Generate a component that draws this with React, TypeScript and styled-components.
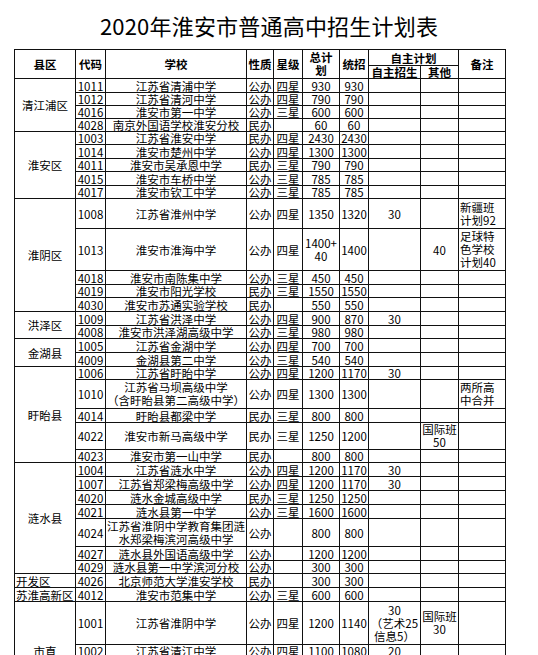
import React from 'react';
import styled, { createGlobalStyle } from 'styled-components';

type School = {
  code: string;
  name: string;
  kind: string;
  star?: string;
  total: string;
  plan: string;
  self?: string;
  other?: string;
  note?: string;
  h: number;
  top?: boolean;
};

type District = {
  name: string;
  align?: 'left' | 'center';
  rows: School[];
};

const districts: District[] = [
  {
    name: '清江浦区',
    rows: [
      { code: '1011', name: '江苏省清浦中学', kind: '公办', star: '四星', total: '930', plan: '930', h: 14 },
      { code: '1012', name: '江苏省清河中学', kind: '公办', star: '四星', total: '790', plan: '790', h: 13 },
      { code: '4016', name: '淮安市第一中学', kind: '公办', star: '三星', total: '600', plan: '600', h: 13 },
      { code: '4028', name: '南京外国语学校淮安分校', kind: '民办', total: '60', plan: '60', h: 13 },
    ],
  },
  {
    name: '淮安区',
    rows: [
      { code: '1003', name: '江苏省淮安中学', kind: '民办', star: '四星', total: '2430', plan: '2430', h: 13 },
      { code: '1014', name: '淮安市楚州中学', kind: '公办', star: '四星', total: '1300', plan: '1300', h: 14 },
      { code: '4011', name: '淮安市吴承恩中学', kind: '民办', star: '三星', total: '790', plan: '790', h: 13 },
      { code: '4015', name: '淮安市车桥中学', kind: '公办', star: '三星', total: '785', plan: '785', h: 14 },
      { code: '4017', name: '淮安市钦工中学', kind: '公办', star: '三星', total: '785', plan: '785', h: 13 },
    ],
  },
  {
    name: '淮阴区',
    rows: [
      { code: '1008', name: '江苏省淮州中学', kind: '公办', star: '四星', total: '1350', plan: '1320', self: '30', note: '新疆班\n计划92', h: 30 },
      { code: '1013', name: '淮安市淮海中学', kind: '公办', star: '四星', total: '1400+\n40', plan: '1400', other: '40', note: '足球特\n色学校\n计划40', h: 42 },
      { code: '4018', name: '淮安市南陈集中学', kind: '公办', star: '三星', total: '450', plan: '450', h: 14 },
      { code: '4019', name: '淮安市阳光学校', kind: '民办', star: '三星', total: '1550', plan: '1550', h: 13 },
      { code: '4030', name: '淮安市苏通实验学校', kind: '民办', total: '550', plan: '550', h: 14 },
    ],
  },
  {
    name: '洪泽区',
    rows: [
      { code: '1009', name: '江苏省洪泽中学', kind: '公办', star: '四星', total: '900', plan: '870', self: '30', h: 14 },
      { code: '4008', name: '淮安市洪泽湖高级中学', kind: '公办', star: '三星', total: '980', plan: '980', h: 13 },
    ],
  },
  {
    name: '金湖县',
    rows: [
      { code: '1005', name: '江苏省金湖中学', kind: '公办', star: '四星', total: '700', plan: '700', h: 14 },
      { code: '4009', name: '金湖县第二中学', kind: '公办', star: '三星', total: '540', plan: '540', h: 14 },
    ],
  },
  {
    name: '盱眙县',
    rows: [
      { code: '1006', name: '江苏省盱眙中学', kind: '公办', star: '四星', total: '1200', plan: '1170', self: '30', h: 13 },
      { code: '1010', name: '江苏省马坝高级中学\n（含盱眙县第二高级中学）', kind: '公办', star: '四星', total: '1300', plan: '1300', note: '两所高\n中合并', h: 29 },
      { code: '4014', name: '盱眙县都梁中学', kind: '民办', star: '三星', total: '800', plan: '800', h: 14 },
      { code: '4022', name: '淮安市新马高级中学', kind: '民办', star: '三星', total: '1250', plan: '1200', other: '国际班\n50', h: 27 },
      { code: '4023', name: '淮安市第一山中学', kind: '民办', total: '800', plan: '800', h: 13 },
    ],
  },
  {
    name: '涟水县',
    rows: [
      { code: '1004', name: '江苏省涟水中学', kind: '公办', star: '四星', total: '1200', plan: '1170', self: '30', h: 14 },
      { code: '1007', name: '江苏省郑梁梅高级中学', kind: '公办', star: '四星', total: '1200', plan: '1170', self: '30', h: 14 },
      { code: '4020', name: '涟水金城高级中学', kind: '民办', star: '三星', total: '1250', plan: '1250', h: 14 },
      { code: '4021', name: '涟水县第一中学', kind: '公办', star: '三星', total: '1600', plan: '1600', h: 14 },
      { code: '4024', name: '江苏省淮阴中学教育集团涟\n水郑梁梅滨河高级中学', kind: '公办', total: '800', plan: '800', h: 28 },
      { code: '4027', name: '涟水县外国语高级中学', kind: '公办', total: '1200', plan: '1200', h: 14 },
      { code: '4029', name: '涟水县第一中学滨河分校', kind: '公办', total: '300', plan: '300', h: 13 },
    ],
  },
  {
    name: '开发区',
    align: 'left',
    rows: [
      { code: '4026', name: '北京师范大学淮安学校', kind: '民办', total: '300', plan: '300', h: 14 },
    ],
  },
  {
    name: '苏淮高新区',
    align: 'left',
    rows: [
      { code: '4012', name: '淮安市范集中学', kind: '公办', star: '三星', total: '600', plan: '600', h: 14 },
    ],
  },
  {
    name: '市直',
    rows: [
      { code: '1001', name: '江苏省淮阴中学', kind: '公办', star: '四星', total: '1200', plan: '1140', self: '30\n（艺术25\n信息5）', other: '国际班\n30', h: 43 },
      { code: '1002', name: '江苏省清江中学', kind: '公办', star: '四星', total: '1100', plan: '1080', self: '20', h: 56, top: true },
    ],
  },
];

const columns = [61, 30, 141, 27, 29, 37, 29, 52, 38, 47];

const GlobalStyle = createGlobalStyle`
  html, body {
    margin: 0;
    padding: 0;
    background: #fff;
  }
  body {
    font-family: "Noto Sans CJK SC", "Noto Sans", sans-serif;
    color: #000;
  }
`;

const Page = styled.div`
  width: 538px;
  height: 655px;
  overflow: hidden;
`;

const Title = styled.h1`
  margin: 0;
  height: 49px;
  padding-top: 12px;
  box-sizing: border-box;
  text-align: center;
  font-size: 22px;
  line-height: 26px;
  font-weight: 400;
  letter-spacing: 0.2px;
`;

const Sheet = styled.table`
  margin-left: 14px;
  width: 491px;
  border-collapse: collapse;
  table-layout: fixed;
`;

const HeadRow = styled.tr<{ $h: number }>`
  height: ${(p) => p.$h}px;
`;

const HeadCell = styled.th`
  border: 1px solid #111;
  padding: 0;
  font-size: 11.5px;
  line-height: 12px;
  font-weight: 700;
  text-align: center;
  vertical-align: middle;
  white-space: nowrap;
`;

const Row = styled.tr<{ $h: number }>`
  height: ${(p) => p.$h}px;
`;

const Cell = styled.td<{ $align?: 'left' | 'center'; $top?: boolean }>`
  border: 1px solid #111;
  padding: 0 1px;
  font-size: 11.5px;
  line-height: 12px;
  text-align: ${(p) => p.$align ?? 'center'};
  vertical-align: ${(p) => (p.$top ? 'top' : 'middle')};
  white-space: nowrap;
  overflow: hidden;
`;

const Stack = styled.span`
  display: inline-block;
  line-height: 13px;
`;

const Lines = ({ text }: { text?: string }) => {
  if (!text) return null;
  const parts = text.split('\n');
  if (parts.length === 1) return <>{text}</>;
  return (
    <Stack>
      {parts.map((line, i) => (
        <React.Fragment key={i}>
          {i > 0 && <br />}
          {line}
        </React.Fragment>
      ))}
    </Stack>
  );
};

export default function App() {
  return (
    <Page>
      <GlobalStyle />
      <Title>2020年淮安市普通高中招生计划表</Title>
      <Sheet>
        <colgroup>
          {columns.map((w, i) => (
            <col key={i} style={{ width: w }} />
          ))}
        </colgroup>
        <thead>
          <HeadRow $h={16}>
            <HeadCell rowSpan={2}>县区</HeadCell>
            <HeadCell rowSpan={2}>代码</HeadCell>
            <HeadCell rowSpan={2}>学校</HeadCell>
            <HeadCell rowSpan={2}>性质</HeadCell>
            <HeadCell rowSpan={2}>星级</HeadCell>
            <HeadCell rowSpan={2}>
              <Stack>
                总计
                <br />
                划
              </Stack>
            </HeadCell>
            <HeadCell rowSpan={2}>统招</HeadCell>
            <HeadCell colSpan={2}>自主计划</HeadCell>
            <HeadCell rowSpan={2}>备注</HeadCell>
          </HeadRow>
          <HeadRow $h={13}>
            <HeadCell>自主招生</HeadCell>
            <HeadCell>其他</HeadCell>
          </HeadRow>
        </thead>
        <tbody>
          {districts.map((d) =>
            d.rows.map((s, i) => (
              <Row key={s.code} $h={s.h}>
                {i === 0 && (
                  <Cell rowSpan={d.rows.length} $align={d.align}>
                    {d.name}
                  </Cell>
                )}
                <Cell $top={s.top}>{s.code}</Cell>
                <Cell $top={s.top}>
                  <Lines text={s.name} />
                </Cell>
                <Cell $top={s.top}>{s.kind}</Cell>
                <Cell $top={s.top}>{s.star}</Cell>
                <Cell $top={s.top}>
                  <Lines text={s.total} />
                </Cell>
                <Cell $top={s.top}>{s.plan}</Cell>
                <Cell $top={s.top}>
                  <Lines text={s.self} />
                </Cell>
                <Cell $top={s.top}>
                  <Lines text={s.other} />
                </Cell>
                <Cell $align="left" $top={s.top}>
                  <Lines text={s.note} />
                </Cell>
              </Row>
            ))
          )}
        </tbody>
      </Sheet>
    </Page>
  );
}
